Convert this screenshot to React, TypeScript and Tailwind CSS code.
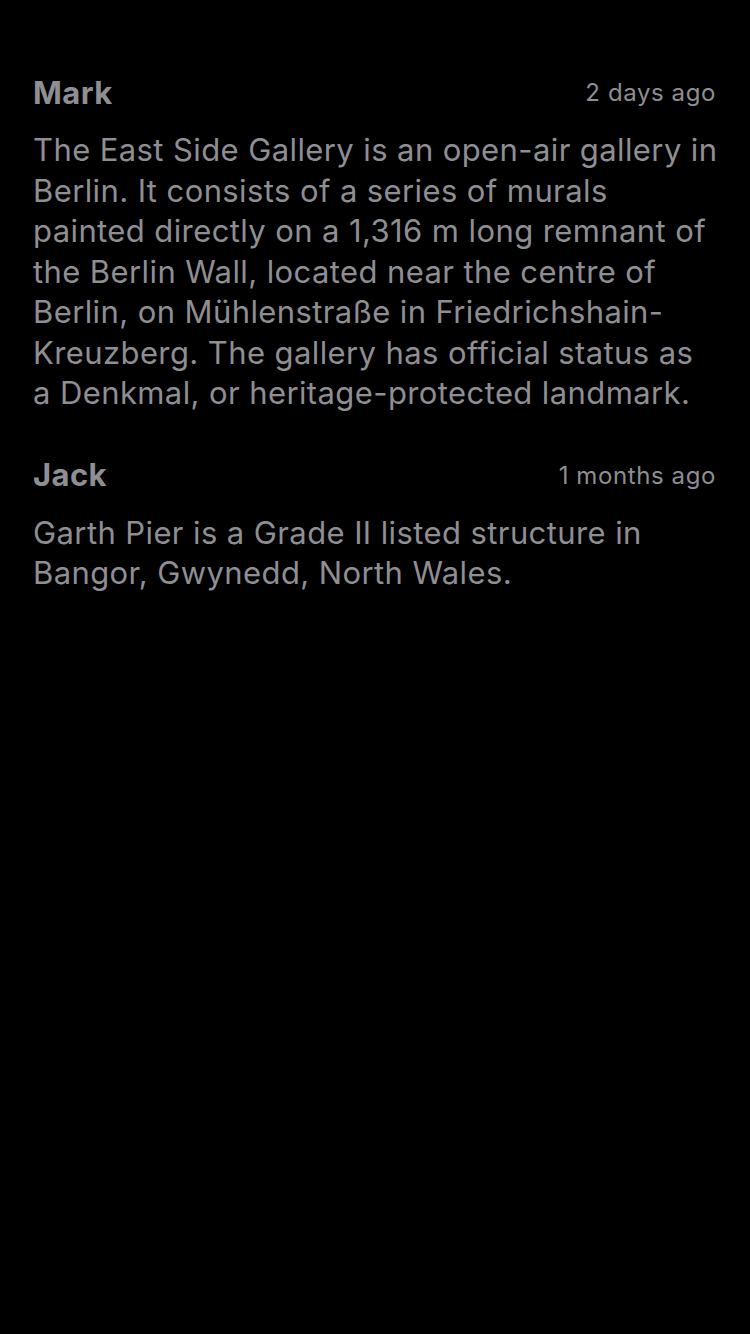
import React from "react";

type Comment = {
  name: string;
  time: string;
  text: string;
};

const comments: Comment[] = [
  {
    name: "Mark",
    time: "2 days ago",
    text: "The East Side Gallery is an open-air gallery in Berlin. It consists of a series of murals painted directly on a 1,316 m long remnant of the Berlin Wall, located near the centre of Berlin, on Mühlenstraße in Friedrichshain-Kreuzberg. The gallery has official status as a Denkmal, or heritage-protected landmark.",
  },
  {
    name: "Jack",
    time: "1 months ago",
    text: "Garth Pier is a Grade II listed structure in Bangor, Gwynedd, North Wales.",
  },
];

const App: React.FC = () => {
  return (
    <div
      className="min-h-[1334px] w-[750px] bg-black pl-[33px] pr-[32px] pt-[73px] text-[#8e8e93]"
      style={{ fontFamily: "Inter, 'Liberation Sans', sans-serif" }}
    >
      <div className="flex flex-col gap-[42px]">
        {comments.map((c) => (
          <div key={c.name}>
            <div className="flex h-[40px] items-center justify-between pr-[2px]">
              <span className="text-[31px] font-bold tracking-[0.4px]">{c.name}</span>
              <span className="text-[24px] tracking-[0.6px]">{c.time}</span>
            </div>
            <p className="mt-[17px] text-[31px] leading-[40.5px] tracking-[0.4px]">{c.text}</p>
          </div>
        ))}
      </div>
    </div>
  );
};

export default App;
